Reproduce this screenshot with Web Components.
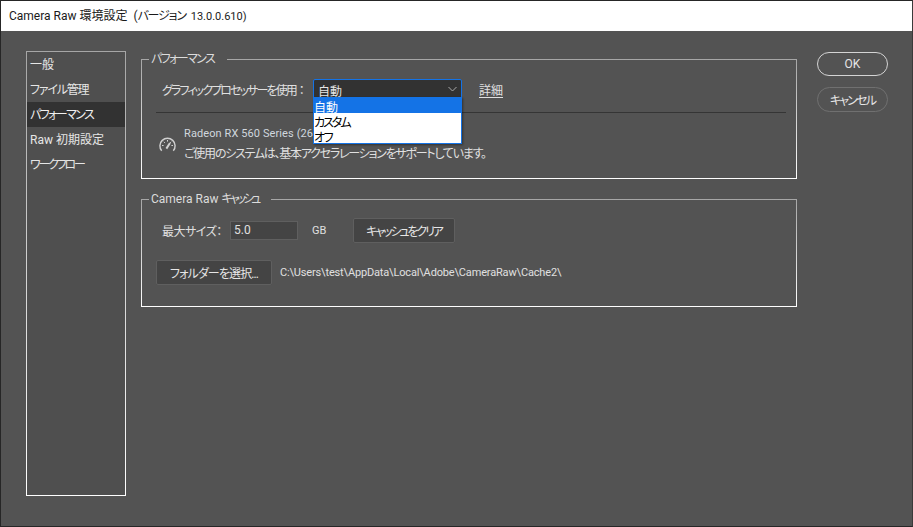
<!DOCTYPE html>
<html lang="ja">
  <head>
    <meta charset="UTF-8" />
    <title>Camera Raw 環境設定</title>
    <style>
      html, body { margin: 0; height: 100%; background: #535353; }
      body {
        font-family: Roboto, "Noto Sans CJK JP", sans-serif;
        font-size: 12px;
        font-feature-settings: "palt";
        color: #e0e0e0;
      }
    </style>

    <!-- the outer dialog frame -->
    <template id="pref-dialog-template">
      <style>
        :host {
          display: flex;
          flex-direction: column;
          box-sizing: border-box;
          width: 913px;
          height: 527px;
          border: 1px solid #262626;
          border-right-color: #3a3a3a;
          background: #535353;
        }
        .title {
          height: 30px;
          flex: none;
          background: #fff;
          color: #1a1a1a;
          padding-left: 8px;
          line-height: 30px;
          font-size: 12px;
          white-space: pre;
        }
        .body {
          flex: 1;
          display: flex;
          padding: 20px 24px 28px 25px;
          min-height: 0;
        }
        .side { flex: none; width: 100px; margin-right: 15px; }
        .main { flex: none; width: 656px; display: flex; flex-direction: column; gap: 12px; }
        .actions { flex: none; width: 71px; margin-left: 20px; display: flex; flex-direction: column; gap: 11px; padding-top: 1px; }
      </style>
      <div class="title"><slot name="title"></slot></div>
      <div class="body">
        <div class="side"><slot name="side"></slot></div>
        <div class="main"><slot name="main"></slot></div>
        <div class="actions"><slot name="actions"></slot></div>
      </div>
    </template>

    <!-- left list of sections -->
    <template id="pref-nav-template">
      <style>
        :host {
          display: flex;
          flex-direction: column;
          box-sizing: border-box;
          height: 445px;
          border: 1px solid;
          border-image: linear-gradient(#a6a6a6, #fff) 1;
          background: #4f4f4f;
        }
      </style>
      <slot></slot>
    </template>

    <template id="pref-nav-item-template">
      <style>
        :host {
          display: block;
          height: 25px;
          line-height: 27px;
          padding-left: 3px;
          color: #e6e6e6;
          font-size: 12px;
          white-space: nowrap;
        }
        :host([selected]) { background: #323232; color: #f0f0f0; }
      </style>
      <slot></slot>
    </template>

    <!-- titled box, uses a real fieldset so the legend cuts the border -->
    <template id="pref-group-template">
      <style>
        :host { display: block; }
        fieldset {
          box-sizing: border-box;
          margin: 0;
          padding: 0 10px 0 14px;
          min-width: 0;
          height: var(--h, 120px);
          border: 1px solid;
          border-image: linear-gradient(#a6a6a6, #fff) 1;
        }
        legend {
          margin-left: -7px;
          padding: 0 13px 0 2px;
          font-size: 12px;
          line-height: 16px;
          color: #dcdcdc;
        }
      </style>
      <fieldset>
        <legend><slot name="legend"></slot></legend>
        <slot></slot>
      </fieldset>
    </template>

    <!-- dark combo box with its open list -->
    <template id="pref-select-template">
      <style>
        :host { display: inline-block; position: relative; width: 149px; height: 20px; }
        .box {
          box-sizing: border-box;
          height: 20px;
          border: 1px solid #1473e6;
          border-radius: 2px;
          background: #323232;
          color: #e6e6e6;
          padding-left: 4px;
          line-height: 18px;
          display: flex;
          justify-content: space-between;
          align-items: center;
        }
        svg { margin-right: 4px; }
        .list {
          position: absolute;
          left: 0;
          top: 18px;
          width: 147px;
          border: 1px solid #1473e6;
          background: #fff;
          color: #000;
          box-shadow: 1px 1px 2px rgba(0,0,0,.4);
          z-index: 5;
        }
        ::slotted(*) { display: block; height: 15px; line-height: 20px; font-size: 12px; }
        ::slotted([current]) { background: #1473e6; color: #fff; }
      </style>
      <div class="box">
        <span><slot name="value"></slot></span>
        <svg width="9" height="6" viewBox="0 0 9 6" fill="none" stroke="#a8a8a8" stroke-width="1"><path d="M.5 1 4.5 5 8.5 1"/></svg>
      </div>
      <div class="list"><slot></slot></div>
    </template>

    <template id="pref-button-template">
      <style>
        :host {
          display: inline-flex;
          align-items: center;
          justify-content: center;
          box-sizing: border-box;
          height: 25px;
          width: var(--w, auto);
          background: #444;
          border: 1px solid #5f5f5f;
          border-radius: 2px;
          color: #e6e6e6;
          font-size: 12px;
          white-space: nowrap;
        }
        :host([pill]) { background: transparent; border-radius: 13px; border: 1px solid #707070; height: 25px; width: 71px; }
        :host([primary]) { border: 1.5px solid #d4d4d4; height: 24px; }
      </style>
      <slot></slot>
    </template>

    <template id="pref-row-template">
      <style>
        :host { display: flex; align-items: center; height: var(--row, 20px); white-space: nowrap; }
      </style>
      <slot></slot>
    </template>
  </head>

  <body>
    <pref-dialog>
      <span slot="title">Camera Raw 環境設定  (<span style="letter-spacing: -1.2px">バージョン</span> <span style="font-size: 11px; margin-left: 2px">13.0.0.610)</span></span>

      <pref-nav slot="side">
        <pref-nav-item>一般</pref-nav-item>
        <pref-nav-item style="letter-spacing: -1.2px">ファイル管理</pref-nav-item>
        <pref-nav-item selected style="letter-spacing: -1.6px">パフォーマンス</pref-nav-item>
        <pref-nav-item>Raw 初期設定</pref-nav-item>
        <pref-nav-item style="letter-spacing: -2.2px">ワークフロー</pref-nav-item>
      </pref-nav>

      <pref-group slot="main" style="--h: 128px">
        <span slot="legend" style="letter-spacing: -1.6px">パフォーマンス</span>
        <pref-row style="margin-top: 12px; padding-left: 6px">
          <span style="width: 151px"><span style="letter-spacing: -1.9px">グラフィックプロセッサーを使用</span><span style="margin-left: 3px">：</span></span>
          <pref-select>
            <span slot="value">自動</span>
            <span current>自動</span>
            <span style="letter-spacing: -2px">カスタム</span>
            <span style="letter-spacing: -1.5px">オフ</span>
          </pref-select>
          <span style="margin-left: 17px; text-decoration: underline; text-underline-offset: 2px">詳細</span>
        </pref-row>
        <div style="height: 1px; background: #353535; margin: 13px 0 0 0"></div>
        <div style="display: flex; align-items: center; margin: 11px 0 0 3px">
          <svg width="17" height="15" viewBox="0 0 17 15" fill="none" stroke="#d0d0d0" stroke-width="1.4" style="margin-right: 8px; margin-top: 1px">
            <path d="M2.7 13.8A7.6 7.6 0 1 1 14.3 13.8"/>
            <path d="M7.4 11.6 11 6" stroke-width="2"/>
            <path d="M3 8.5H4.6M4.8 4.8 5.9 5.9M8.5 3V4.6M12.2 4.8 11.1 5.9M12.4 8.5H14" stroke-width="1"/>
          </svg>
          <div style="line-height: 20px">
            <div style="font-size: 11px; letter-spacing: .1px; color: #d0d7de">Radeon RX 560 Series (26.20.13003.1007)</div>
            <div style="letter-spacing: -1.25px">ご使用のシステムは、基本アクセラレーションをサポートしています。</div>
          </div>
        </div>
      </pref-group>

      <pref-group slot="main" style="--h: 116px">
        <span slot="legend">Camera Raw <span style="letter-spacing: -3px">キャッシュ</span></span>
        <pref-row style="--row: 25px; margin-top: 11px; padding-left: 6px">
          <span style="width: 68px; letter-spacing: -.5px">最大サイズ：</span>
          <span style="box-sizing: border-box; width: 68px; height: 19px; line-height: 17px; padding-left: 3px; background: #444; border: 1px solid #5f5f5f">5.0</span>
          <span style="margin-left: 14px; width: 41px; font-size: 11px">GB</span>
          <pref-button style="--w: 102px"><span style="letter-spacing: -2.1px">キャッシュをクリア</span></pref-button>
        </pref-row>
        <pref-row style="--row: 25px; margin-top: 17px">
          <pref-button style="--w: 116px"><span style="letter-spacing: -.9px">フォルダーを選択...</span></pref-button>
          <span style="margin-left: 8px; font-size: 11px; letter-spacing: -.16px">C:\Users\test\AppData\Local\Adobe\CameraRaw\Cache2\</span>
        </pref-row>
      </pref-group>

      <pref-button slot="actions" pill primary>OK</pref-button>
      <pref-button slot="actions" pill><span style="letter-spacing: -1.8px">キャンセル</span></pref-button>
    </pref-dialog>

    <script>
      // all elements here just clone a template into an open shadow root
      function define(tag, templateId) {
        customElements.define(tag, class extends HTMLElement {
          constructor() {
            super();
            const template = document.getElementById(templateId);
            this.attachShadow({ mode: 'open' }).appendChild(template.content.cloneNode(true));
          }
        });
      }

      define('pref-dialog', 'pref-dialog-template');
      define('pref-nav', 'pref-nav-template');
      define('pref-nav-item', 'pref-nav-item-template');
      define('pref-group', 'pref-group-template');
      define('pref-select', 'pref-select-template');
      define('pref-button', 'pref-button-template');
      define('pref-row', 'pref-row-template');
    </script>
  </body>
</html>
